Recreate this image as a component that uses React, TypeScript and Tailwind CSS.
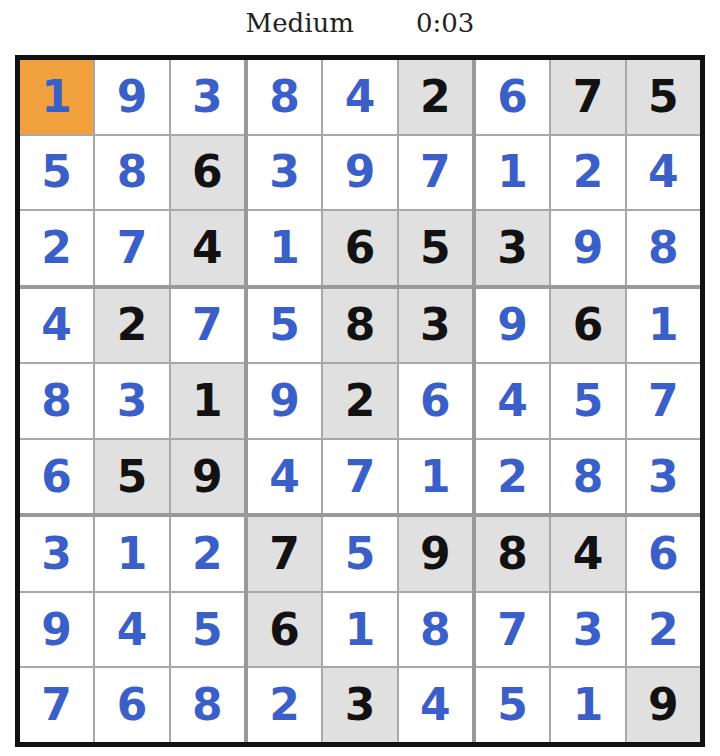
const solution = [
  [1, 9, 3, 8, 4, 2, 6, 7, 5],
  [5, 8, 6, 3, 9, 7, 1, 2, 4],
  [2, 7, 4, 1, 6, 5, 3, 9, 8],
  [4, 2, 7, 5, 8, 3, 9, 6, 1],
  [8, 3, 1, 9, 2, 6, 4, 5, 7],
  [6, 5, 9, 4, 7, 1, 2, 8, 3],
  [3, 1, 2, 7, 5, 9, 8, 4, 6],
  [9, 4, 5, 6, 1, 8, 7, 3, 2],
  [7, 6, 8, 2, 3, 4, 5, 1, 9],
];

// givens, as "row-col" (0-based)
const givens = new Set([
  "0-5", "0-7", "0-8",
  "1-2",
  "2-2", "2-4", "2-5", "2-6",
  "3-1", "3-4", "3-5", "3-7",
  "4-2", "4-4",
  "5-1", "5-2",
  "6-3", "6-5", "6-6", "6-7",
  "7-3",
  "8-4", "8-8",
]);

const selected = "0-0";

function Cell({ r, c }: { r: number; c: number }) {
  const key = `${r}-${c}`;
  const given = givens.has(key);
  const bg = key === selected ? "bg-[#f0a03c]" : given ? "bg-[#e0e0e0]" : "bg-white";
  const color = given ? "text-[#121212]" : "text-[#3b5fc8]";
  return (
    <div
      className={`${bg} ${color} flex items-center justify-center text-[44px] font-bold leading-none`}
      style={{ fontFamily: '"DejaVu Sans", sans-serif' }}
    >
      {solution[r][c]}
    </div>
  );
}

function Box({ br, bc }: { br: number; bc: number }) {
  const cells = [];
  for (let i = 0; i < 3; i++) {
    for (let j = 0; j < 3; j++) {
      cells.push(<Cell key={`${i}-${j}`} r={br * 3 + i} c={bc * 3 + j} />);
    }
  }
  return <div className="grid grid-cols-3 grid-rows-3 gap-[2px] bg-[#a8a8a8]">{cells}</div>;
}

export default function App() {
  const boxes = [];
  for (let i = 0; i < 3; i++) {
    for (let j = 0; j < 3; j++) {
      boxes.push(<Box key={`${i}-${j}`} br={i} bc={j} />);
    }
  }
  return (
    <div className="w-[720px] h-[756px] bg-white">
      <div
        className="h-[55px] flex items-start justify-center gap-[62px] pt-[4px] text-[26px] text-[#222]"
        style={{ fontFamily: '"DejaVu Serif", serif' }}
      >
        <span>Medium</span>
        <span>0:03</span>
      </div>
      <div className="ml-[15px] w-[690px] h-[692px] border-[5px] border-[#111] grid grid-cols-3 grid-rows-3 gap-[4px] bg-[#999]">
        {boxes}
      </div>
    </div>
  );
}
